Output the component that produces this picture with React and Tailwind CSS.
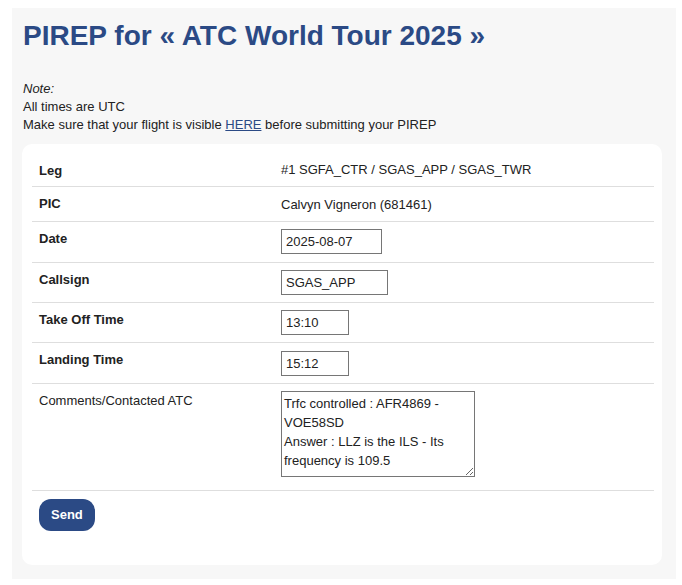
import React, { useState } from 'react';

const font = { fontFamily: '"Liberation Sans", Arial, sans-serif' };

const Row = ({ label, bold = true, children, className = '' }) => (
    <div className={`grid grid-cols-[241px_1fr] border-b border-[#dedede] ${className}`}>
        <div className={`pl-[7px] pt-[8px] text-[13px] leading-[17px] text-[#222] ${bold ? 'font-bold' : ''}`}>
            {label}
        </div>
        <div className="pl-[8px]">{children}</div>
    </div>
);

const Field = ({ value, onChange, width }) => (
    <input
        value={value}
        onChange={(e) => onChange(e.target.value)}
        className={`${width} h-[25px] border border-[#767676] bg-white px-[4px] text-[13px] text-[#222] outline-none`}
        style={font}
    />
);

export default function App() {
    const [date, setDate] = useState('2025-08-07');
    const [callsign, setCallsign] = useState('SGAS_APP');
    const [takeOff, setTakeOff] = useState('13:10');
    const [landing, setLanding] = useState('15:12');
    const [comments, setComments] = useState(
        'Trfc controlled : AFR4869 - VOE58SD\nAnswer : LLZ is the ILS - Its frequency is 109.5'
    );

    return (
        <div className="min-h-screen bg-white pt-[8px]" style={font}>
            <div className="ml-[12px] mr-[6px] bg-[#f7f7f7] pl-[10px] pr-[14px] pt-[12px] pb-[14px]">
                <h1 className="pl-[1px] text-[28px] font-bold leading-[32px] text-[#2b4a85]">
                    PIREP for « ATC World Tour 2025 »
                </h1>

                <div className="mt-[28px] pl-[1px] text-[13px] leading-[18px] text-[#222]">
                    <p className="italic">Note:</p>
                    <p>All times are UTC</p>
                    <p>
                        Make sure that your flight is visible{' '}
                        <a href="#" className="text-[#2b4a85] underline">HERE</a>{' '}
                        before submitting your PIREP
                    </p>
                </div>

                <div className="mt-[10px] rounded-[10px] bg-white pl-[10px] pr-[8px] pt-[10px] pb-[34px]">
                    <Row label="Leg" className="h-[33px]">
                        <div className="pt-[8px] text-[13px] leading-[16px] text-[#222]">
                            #1 SGFA_CTR / SGAS_APP / SGAS_TWR
                        </div>
                    </Row>
                    <Row label="PIC" className="h-[35px]">
                        <div className="pt-[9px] text-[13px] leading-[17px] text-[#222]">
                            Calvyn Vigneron (681461)
                        </div>
                    </Row>
                    <Row label="Date" className="h-[41px]">
                        <div className="pt-[7px]">
                            <Field value={date} onChange={setDate} width="w-[101px]" />
                        </div>
                    </Row>
                    <Row label="Callsign" className="h-[40px]">
                        <div className="pt-[7px]">
                            <Field value={callsign} onChange={setCallsign} width="w-[107px]" />
                        </div>
                    </Row>
                    <Row label="Take Off Time" className="h-[40px]">
                        <div className="pt-[7px]">
                            <Field value={takeOff} onChange={setTakeOff} width="w-[68px]" />
                        </div>
                    </Row>
                    <Row label="Landing Time" className="h-[41px]">
                        <div className="pt-[8px]">
                            <Field value={landing} onChange={setLanding} width="w-[68px]" />
                        </div>
                    </Row>
                    <Row label="Comments/Contacted ATC" bold={false} className="h-[107px]">
                        <div className="pt-[7px]">
                            <textarea
                                value={comments}
                                onChange={(e) => setComments(e.target.value)}
                                className="block h-[86px] w-[194px] border border-[#767676] bg-white px-[2px] pt-[2px] text-[13px] leading-[19px] text-[#222] outline-none"
                                style={font}
                            />
                        </div>
                    </Row>

                    <div className="pl-[7px] pt-[8px]">
                        <button className="h-[32px] rounded-[12px] bg-[#2b4a85] px-[12px] text-[13px] font-bold text-white">
                            Send
                        </button>
                    </div>
                </div>
            </div>
        </div>
    );
}
